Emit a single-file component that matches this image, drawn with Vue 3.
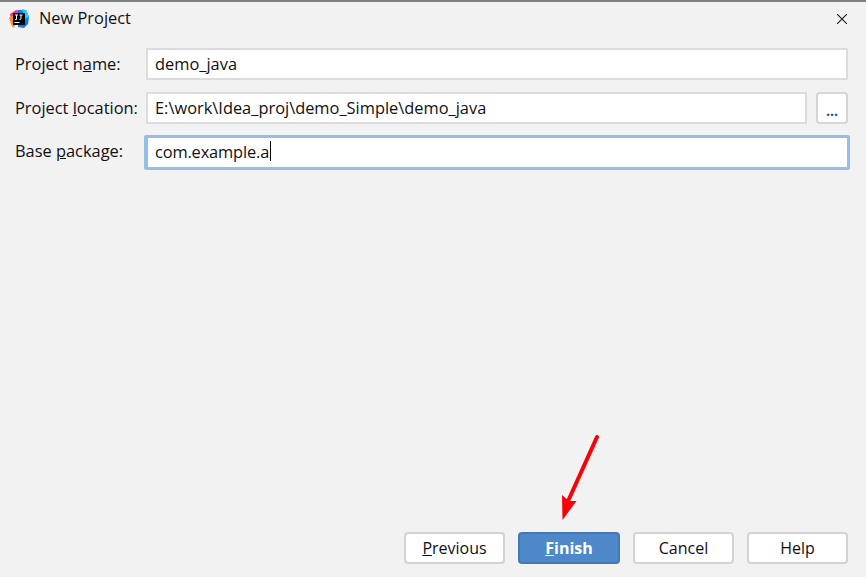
<script setup>
const fields = [
  { before: 'Project n', key: 'a', after: 'me:', value: 'demo_java' },
  { before: 'Project ', key: 'l', after: 'ocation:', value: 'E:\\work\\Idea_proj\\demo_Simple\\demo_java', browse: true },
  { before: 'Base ', key: 'p', after: 'ackage:', value: 'com.example.a', focused: true }
]
</script>

<template>
  <div class="dialog">
    <header class="title-bar">
      <svg class="logo" width="20" height="20" viewBox="0 0 20 20">
        <path d="M1 5 L7 1 L12 2 L8 10 L3 15 Z" fill="#fc318c" />
        <path d="M0 9 L5 6 L8 14 L4 19 L2 15 Z" fill="#fe8c1e" />
        <path d="M9 1 L17 1 L20 8 L19 15 L15 19 L9 18 Z" fill="#087cfa" />
        <path d="M13 0 L17 1 L20 8 L16 10 Z" fill="#21d0e8" />
        <rect x="4" y="4" width="12" height="12" fill="#000" />
        <rect x="5.500" y="13" width="5" height="1" fill="#fff" />
        <path d="M6 6 H9 M7.500 6 V10.500 H6 M10.500 6 H13.500 M12 6 V10 Q12 10.500 10.500 10.500" stroke="#fff" stroke-width="1" fill="none" />
      </svg>
      <span class="title">New Project</span>
      <svg class="close" width="10" height="10" viewBox="0 0 10 10">
        <path d="M0 0 L10 10 M10 0 L0 10" stroke="#1a1a1a" stroke-width="1.100" fill="none" />
      </svg>
    </header>

    <main class="form">
      <div v-for="f in fields" :key="f.value" class="row">
        <label class="label" :class="{ raised: f.focused }">{{ f.before }}<u>{{ f.key }}</u>{{ f.after }}</label>
        <div class="control" :class="{ focused: f.focused }">
          <div class="input">{{ f.value }}<i v-if="f.focused" class="caret"></i></div>
          <button v-if="f.browse" class="browse">...</button>
        </div>
      </div>
    </main>

    <footer class="actions">
      <button class="btn"><u>P</u>revious</button>
      <button class="btn primary"><u>F</u>inish</button>
      <button class="btn">Cancel</button>
      <button class="btn">Help</button>
    </footer>

    <svg class="arrow" width="50" height="100" viewBox="0 0 50 100">
      <path d="M37 2 L9 64" stroke="#fb0007" stroke-width="4" stroke-linecap="round" fill="none" />
      <path d="M2.500 85 L2 60 L9 66 L16.500 66 Z" fill="#fb0007" />
    </svg>
  </div>
</template>

<style>
html, body { margin: 0; background: #f2f2f2; }
</style>

<style scoped>
.dialog {
  position: relative;
  width: 866px;
  height: 577px;
  box-sizing: border-box;
  display: flex;
  flex-direction: column;
  background: #f2f2f2;
  border-top: 2px solid #808080;
  font-family: "Open Sans", "Noto Sans", sans-serif;
  font-size: 16.400px;
  color: #111;
  overflow: hidden;
}
.title-bar {
  display: flex;
  align-items: center;
  height: 33px;
  padding: 0 19px 0 9px;
}
.logo { flex: none; }
.title { margin-left: 10px; flex: 1; padding-bottom: 2px; }
.form {
  flex: 1;
  display: flex;
  flex-direction: column;
  gap: 12px;
  padding: 13px 18px 0 15px;
}
.row {
  display: flex;
  align-items: center;
  height: 32px;
}
.label { width: 131px; flex: none; white-space: nowrap; position: relative; top: -1px; }
.label.raised { top: -2px; }
.control {
  flex: 1;
  display: flex;
  gap: 9px;
  height: 32px;
}
.input {
  flex: 1;
  box-sizing: border-box;
  display: flex;
  align-items: center;
  padding: 0 0 2px 7px;
  background: #fff;
  border: 2px solid #dcdcdc;
  white-space: nowrap;
}
.focused { margin: 0 -2px; height: 35px; }
.focused .input {
  border: 3px solid #94bfeb;
  border-left-width: 4px;
  border-radius: 2px;
  padding-left: 7px;
  letter-spacing: -0.150px;
}
.caret {
  display: inline-block;
  width: 1px;
  height: 20px;
  margin-left: 1px;
  background: #000;
}
.browse {
  flex: none;
  width: 32px;
  height: 32px;
  padding: 4px 0 0;
  background: #fff;
  border: 2px solid #d6d6d6;
  border-radius: 4px;
  color: #0b4f9e;
  font: 700 14px "Open Sans", sans-serif;
}
.actions {
  display: flex;
  justify-content: flex-end;
  gap: 13px;
  padding: 0 18px 13px 0;
}
.btn {
  width: 101px;
  height: 32px;
  padding: 0;
  box-sizing: border-box;
  background: #fff;
  border: 2px solid #d3d3d3;
  border-radius: 4px;
  color: #111;
  font: 16px "Open Sans", "Noto Sans", sans-serif;
}
.btn.primary {
  background: #4e88c8;
  border-color: #4479b4;
  color: #fff;
  font-weight: 700;
  width: 102px;
}
.arrow {
  position: absolute;
  left: 560px;
  top: 433px;
}
</style>
